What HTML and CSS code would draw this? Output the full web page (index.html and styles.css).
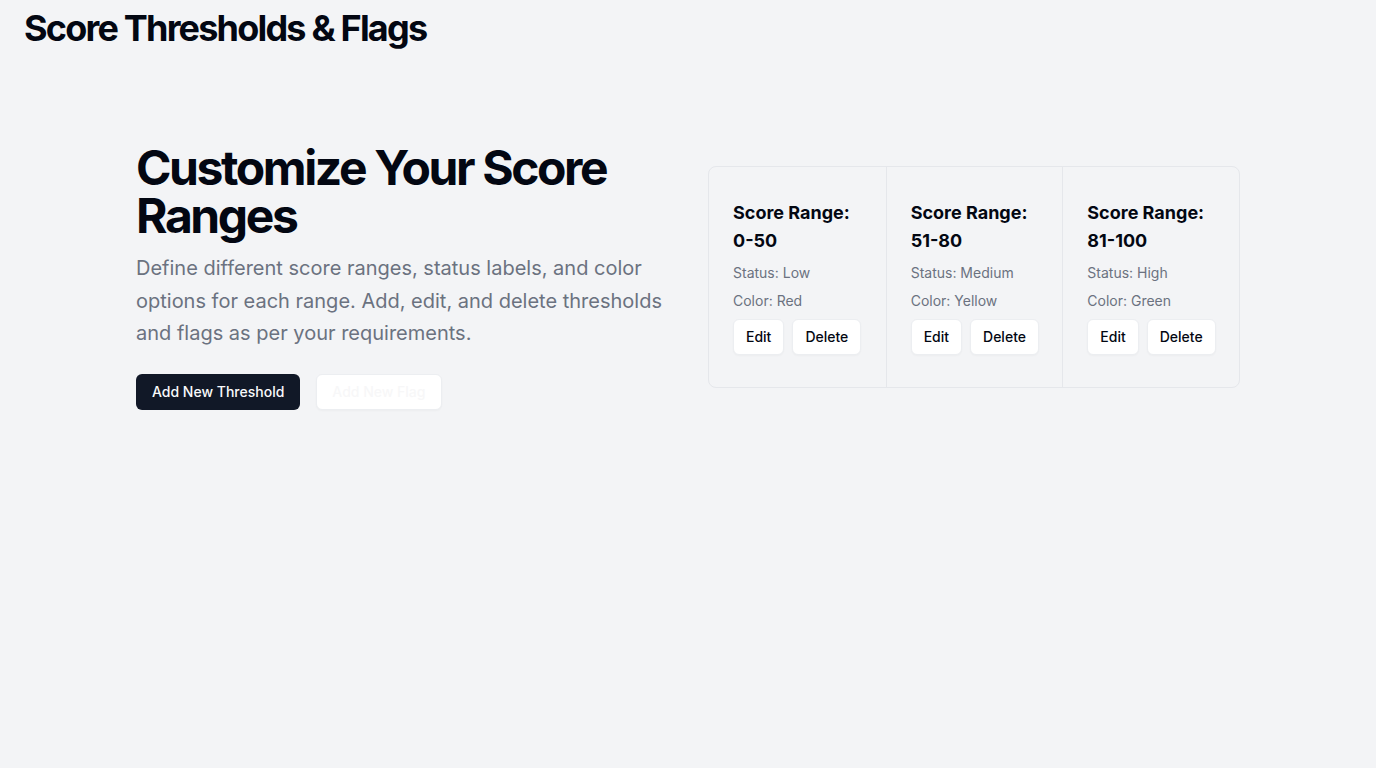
FILE: index.html
```html
<!DOCTYPE html>
<html lang="en">
<head>
<meta charset="utf-8">
<title>Score Thresholds &amp; Flags</title>
<link rel="stylesheet" href="styles.css">
</head>
<body>
<header class="topbar">
  <h1 class="brand">Score Thresholds &amp; Flags</h1>
</header>
<main class="main">
  <section class="hero">
    <div class="intro">
      <h2 class="intro-title">Customize Your Score Ranges</h2>
      <p class="intro-text">Define different score ranges, status labels, and color options for each range. Add, edit, and delete thresholds and flags as per your requirements.</p>
      <div class="intro-actions">
        <button class="btn btn-dark">Add New Threshold</button>
        <button class="btn btn-ghost">Add New Flag</button>
      </div>
    </div>
    <div class="ranges">
      <div class="range">
        <h3 class="range-title">Score Range: 0-50</h3>
        <p class="range-meta">Status: Low</p>
        <p class="range-meta">Color: Red</p>
        <div class="range-actions">
          <button class="btn btn-light">Edit</button>
          <button class="btn btn-light">Delete</button>
        </div>
      </div>
      <div class="range">
        <h3 class="range-title">Score Range: 51-80</h3>
        <p class="range-meta">Status: Medium</p>
        <p class="range-meta">Color: Yellow</p>
        <div class="range-actions">
          <button class="btn btn-light">Edit</button>
          <button class="btn btn-light">Delete</button>
        </div>
      </div>
      <div class="range">
        <h3 class="range-title">Score Range: 81-100</h3>
        <p class="range-meta">Status: High</p>
        <p class="range-meta">Color: Green</p>
        <div class="range-actions">
          <button class="btn btn-light">Edit</button>
          <button class="btn btn-light">Delete</button>
        </div>
      </div>
    </div>
  </section>
</main>
</body>
</html>
```

FILE: styles.css
```css
* { box-sizing: border-box; }
html, body { margin: 0; padding: 0; }
body {
  background: #f3f4f6;
  font-family: Inter, "Liberation Sans", sans-serif;
  color: #030712;
  min-height: 768px;
}
h1, h2, h3, p { margin: 0; }

.topbar {
  padding: 8px 24px;
}
.brand {
  font-size: 36px;
  line-height: 40px;
  font-weight: 700;
  letter-spacing: -0.05em;
  color: #030712;
}

.main {
  padding-top: 88px;
}
.hero {
  max-width: 1104px;
  margin: 0 auto;
  display: grid;
  grid-template-columns: minmax(0, 532px) minmax(0, 532px);
  column-gap: 40px;
  align-items: center;
}

.intro-title {
  font-size: 48px;
  line-height: 48px;
  font-weight: 700;
  letter-spacing: -0.05em;
  color: #030712;
}
.intro-text {
  margin-top: 12px;
  font-size: 20px;
  line-height: 32.5px;
  color: #6b7280;
}
.intro-actions {
  margin-top: 24px;
  display: flex;
  gap: 16px;
}

.btn {
  font-family: inherit;
  font-size: 14px;
  font-weight: 500;
  height: 36px;
  padding: 0 15px;
  border-radius: 6px;
  border: 1px solid transparent;
  cursor: pointer;
}
.btn-dark {
  background: #111827;
  color: #f9fafb;
}
.btn-ghost {
  background: #ffffff;
  color: #f7f7f8;
  border-color: #eceef1;
  box-shadow: 0 1px 2px rgba(0,0,0,0.03);
}
.btn-light {
  background: #ffffff;
  color: #030712;
  border-color: #eceef1;
  padding: 0 12px;
  box-shadow: 0 1px 2px rgba(0,0,0,0.03);
}

.ranges {
  display: grid;
  grid-template-columns: repeat(3, minmax(0, 1fr));
  border: 1px solid #e5e7eb;
  border-radius: 8px;
}
.range {
  padding: 32px 24px;
  display: flex;
  flex-direction: column;
  gap: 8px;
}
.range + .range {
  border-left: 1px solid #e5e7eb;
}
.range-title {
  font-size: 18px;
  line-height: 28px;
  font-weight: 700;
  color: #030712;
}
.range-meta {
  font-size: 14px;
  line-height: 20px;
  color: #6b7280;
}
.range-actions {
  display: flex;
  gap: 8px;
}
```
